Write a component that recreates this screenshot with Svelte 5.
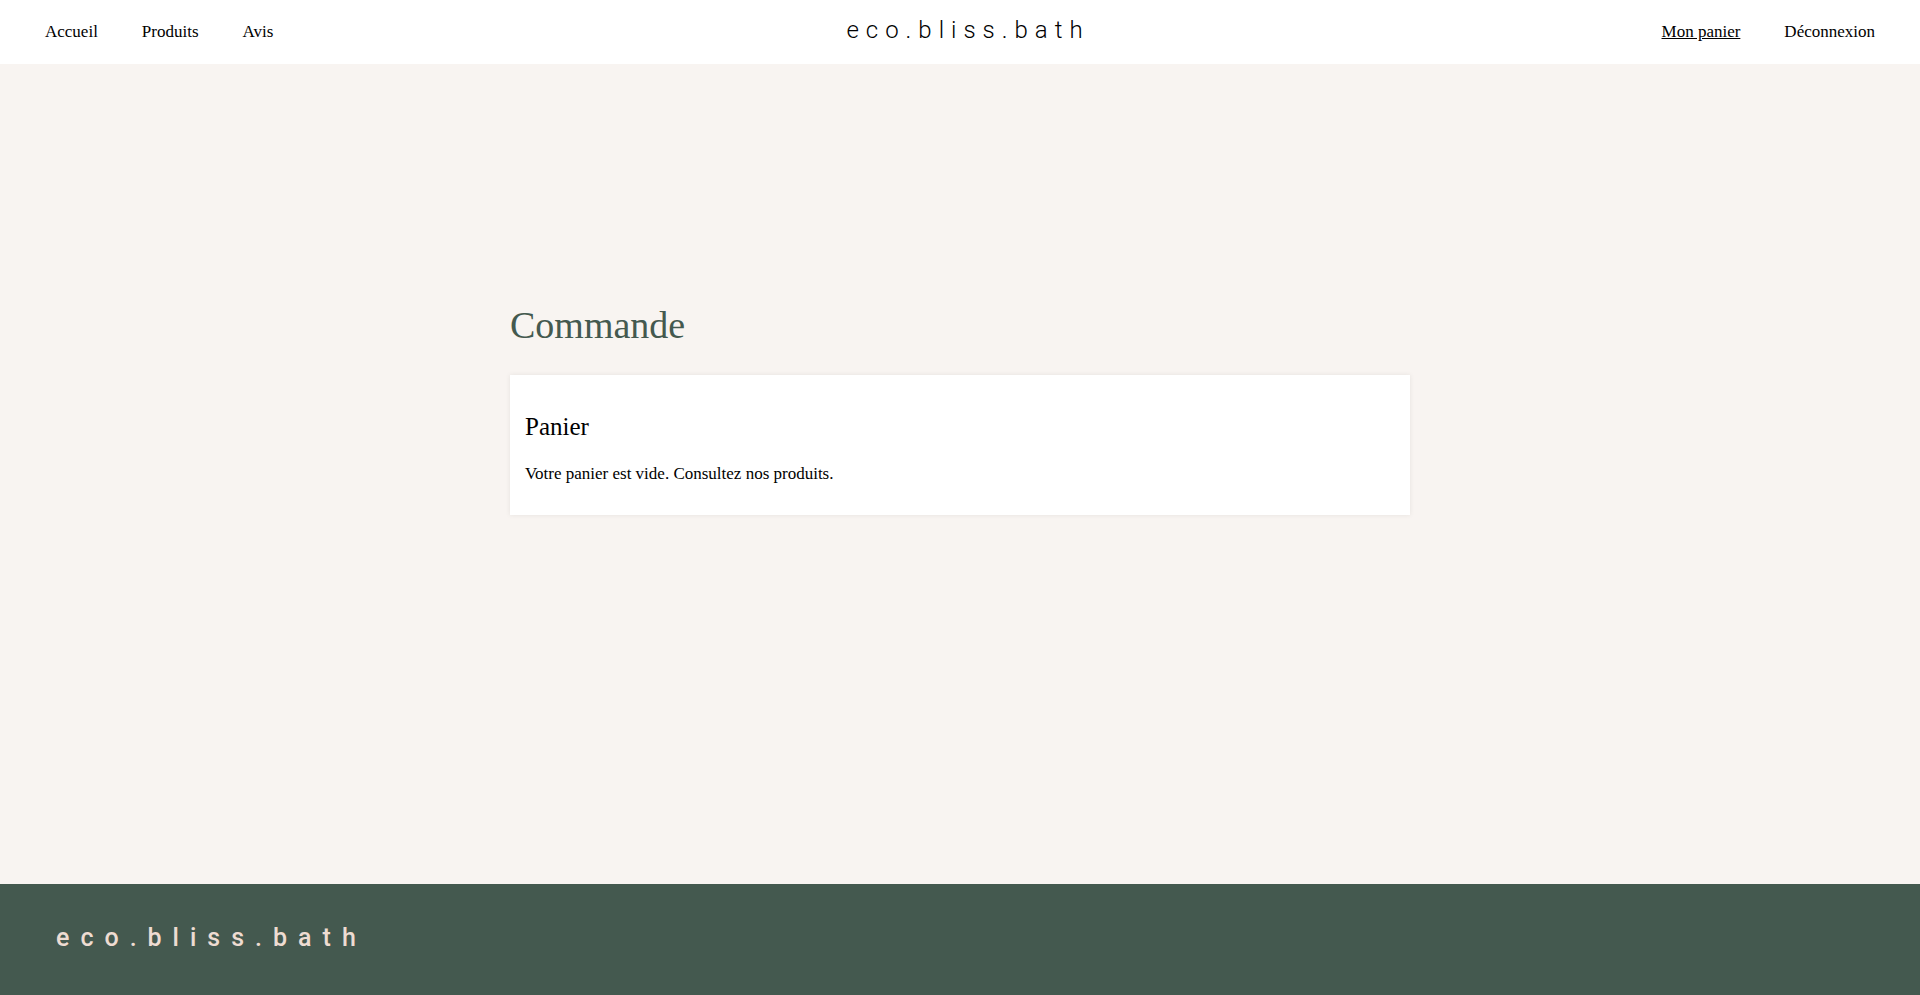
<script>
  const mainLinks = [
    { label: 'Accueil', href: '#accueil' },
    { label: 'Produits', href: '#produits' },
    { label: 'Avis', href: '#avis' }
  ];
  const accountLinks = [
    { label: 'Mon panier', href: '#panier', active: true },
    { label: 'Déconnexion', href: '#deconnexion' }
  ];
</script>

<div class="page">
  <header>
    <nav aria-label="Navigation principale">
      {#each mainLinks as link}
        <a href={link.href}>{link.label}</a>
      {/each}
    </nav>
    <a class="logo" href="#accueil">eco.bliss.bath</a>
    <nav class="account" aria-label="Compte">
      {#each accountLinks as link}
        <a href={link.href} class:active={link.active}>{link.label}</a>
      {/each}
    </nav>
  </header>

  <main>
    <h1>Commande</h1>
    <section>
      <h2>Panier</h2>
      <p>Votre panier est vide. Consultez nos produits.</p>
    </section>
  </main>

  <footer>
    <span class="footer-logo">eco.bliss.bath</span>
  </footer>
</div>

<style>
  :global(body) {
    margin: 0;
    background: #f8f4f1;
  }

  .page {
    min-height: 100vh;
    display: flex;
    flex-direction: column;
    font-family: 'Liberation Serif', serif;
    font-size: 17px;
    line-height: 24px;
    color: #000;
  }

  header {
    display: grid;
    grid-template-columns: 1fr auto 1fr;
    align-items: center;
    height: 64px;
    padding: 0 45px;
    background: #fff;
  }

  nav {
    display: flex;
    gap: 44px;
  }

  .account {
    justify-content: flex-end;
  }

  a {
    color: inherit;
    text-decoration: none;
  }

  .active {
    text-decoration: underline;
  }

  .logo {
    padding: 0 0 4px 16px;
    font-family: Roboto, sans-serif;
    font-size: 24px;
    font-weight: 300;
    letter-spacing: 7px;
  }

  main {
    flex: 1;
    width: 100%;
    max-width: 900px;
    margin: 0 auto;
    padding-top: 236px;
    box-sizing: border-box;
  }

  h1 {
    margin: 0 0 25px;
    font-size: 38px;
    line-height: 50px;
    font-weight: 400;
    color: #44594f;
  }

  section {
    padding: 36px 15px 29px;
    background: #fff;
    box-shadow: 0 0 5px rgba(0, 0, 0, 0.08);
  }

  h2 {
    margin: 0 0 19px;
    font-size: 25px;
    line-height: 32px;
    font-weight: 400;
  }

  p {
    margin: 0;
  }

  footer {
    display: flex;
    align-items: center;
    height: 111px;
    padding: 0 56px;
    box-sizing: border-box;
    background: #44594f;
  }

  .footer-logo {
    padding-bottom: 4px;
    font-family: Roboto, sans-serif;
    font-size: 25px;
    font-weight: 500;
    letter-spacing: 11px;
    color: #eedcd2;
  }
</style>
